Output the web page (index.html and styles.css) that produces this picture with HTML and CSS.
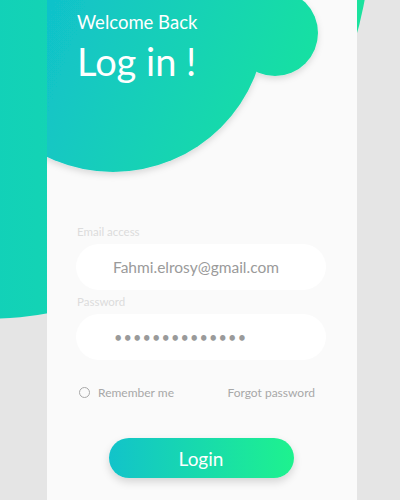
FILE: index.html
```html
<!DOCTYPE html>
<html lang="en">
<head>
<meta charset="utf-8">
<title>Log in</title>
<link rel="stylesheet" href="styles.css">
</head>
<body>
<div class="bg-blob"></div>
<main class="page">
  <section class="card">
    <svg class="card-blob" width="310" height="200" viewBox="0 0 310 200" aria-hidden="true">
      <defs>
        <linearGradient id="blobGrad" gradientUnits="userSpaceOnUse" x1="0" y1="20" x2="280" y2="120">
          <stop offset="0" stop-color="#11c2ca"/>
          <stop offset="1" stop-color="#1ae49d"/>
        </linearGradient>
        <filter id="blobShadow" x="-20%" y="-20%" width="140%" height="140%">
          <feDropShadow dx="0" dy="3" stdDeviation="3" flood-color="#000" flood-opacity="0.13"/>
        </filter>
      </defs>
      <g filter="url(#blobShadow)" fill="url(#blobGrad)">
        <circle cx="66" cy="19" r="153"/>
        <circle cx="228" cy="33" r="43"/>
      </g>
    </svg>
    <header class="card-header">
      <p class="welcome">Welcome Back</p>
      <h1 class="title">Log in !</h1>
    </header>
    <form class="form">
      <label class="field-label">Email access</label>
      <div class="field">Fahmi.elrosy@gmail.com</div>
      <label class="field-label">Password</label>
      <div class="field field-pass">••••••••••••••</div>
      <div class="options">
        <span class="remember"><span class="radio"></span>Remember me</span>
        <span class="forgot">Forgot password</span>
      </div>
      <div class="btn-row">
        <button type="button" class="btn">Login</button>
      </div>
    </form>
  </section>
</main>
</body>
</html>
```

FILE: styles.css
```css
html, body {
  margin: 0;
  padding: 0;
}
body {
  width: 400px;
  height: 500px;
  overflow: hidden;
  background: #e5e5e5;
  position: relative;
  font-family: "Lato", "Open Sans", sans-serif;
}
.bg-blob {
  position: absolute;
  left: -407px;
  top: -459px;
  width: 778px;
  height: 778px;
  border-radius: 50%;
  background: linear-gradient(to right, #12d1b8 52%, #1be29e 97%);
}
.page {
  position: relative;
  padding-left: 47px;
}
.card {
  position: relative;
  width: 310px;
  height: 500px;
  background: #fafafa;
  overflow: hidden;
}
.card-blob {
  position: absolute;
  left: 0;
  top: 0;
}
.card-header {
  position: relative;
  padding: 9px 30px 0;
  height: 224px;
  box-sizing: border-box;
  color: #fff;
}
.welcome {
  margin: 0;
  font-size: 18.5px;
  line-height: 26px;
}
.title {
  margin: 4px 0 0;
  font-size: 38px;
  font-weight: 400;
  line-height: 44px;
}
.form {
  position: relative;
  padding: 0 31px 0 29px;
}
.field-label {
  display: block;
  padding-left: 1px;
  font-size: 11.5px;
  line-height: 16px;
  color: #dcdcdc;
  margin-bottom: 4px;
}
.field {
  height: 46px;
  border-radius: 23px;
  background: #fff;
  display: flex;
  align-items: center;
  padding-left: 37px;
  font-size: 15.5px;
  color: #9a9a9a;
  margin-bottom: 4px;
}
.field-pass {
  font-size: 14.5px;
  letter-spacing: 1.1px;
  padding-left: 38px;
}
.options {
  display: flex;
  justify-content: space-between;
  align-items: center;
  height: 16px;
  margin-top: 24px;
  padding: 0 11px 0 3px;
  font-size: 12px;
  color: #a8a8a8;
}
.remember {
  display: flex;
  align-items: center;
  gap: 8px;
}
.radio {
  width: 9px;
  height: 9px;
  border: 1.5px solid #a8a8a8;
  border-radius: 50%;
}
.btn-row {
  display: flex;
  justify-content: center;
  margin-top: 38px;
}
.btn {
  width: 185px;
  height: 40px;
  border: none;
  border-radius: 20px;
  background: linear-gradient(to right, #12c3ca, #1ef28e);
  box-shadow: 0 4px 8px rgba(0, 0, 0, 0.15);
  color: #fff;
  font-family: "Lato", sans-serif;
  font-size: 19px;
}
```
